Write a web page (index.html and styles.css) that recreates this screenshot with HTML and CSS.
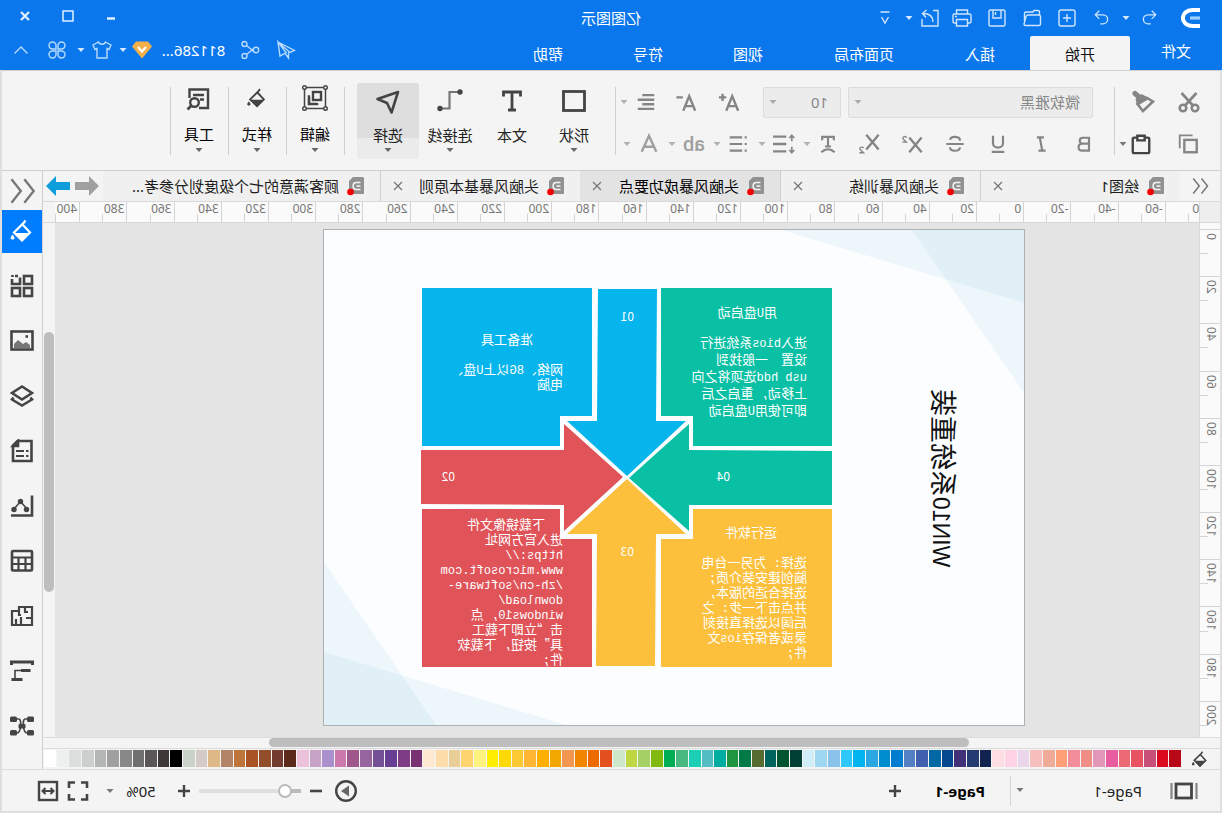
FILE: index.html
```html
<!DOCTYPE html>
<html lang="zh-CN">
<head>
<meta charset="utf-8">
<title>亿图图示</title>
<link rel="stylesheet" href="styles.css">
</head>
<body>
<svg class="sprite" aria-hidden="true">
  <symbol id="caret" viewBox="0 0 8 8"><path d="M0.500 2h7L4 6z" fill="currentColor"/></symbol>
  <symbol id="logo" viewBox="0 0 20 22"><path d="M1 3h7c13.500 0 13.500 16 0 16H1" fill="none" stroke="#fff" stroke-width="4"/><path d="M1 11h10" stroke="#9ed0ff" stroke-width="3.200"/></symbol>
  <symbol id="undo" viewBox="0 0 20 20"><path d="M7 2 2.500 6.500 7 11M3 6.500h8c7 0 7 10 0 10H8" /></symbol>
  <symbol id="redo" viewBox="0 0 20 20"><path d="M13 2l4.500 4.500L13 11M17 6.500H9c-7 0-7 10 0 10h3"/></symbol>
  <symbol id="new" viewBox="0 0 20 20"><rect x="2" y="2" width="16" height="16" rx="2"/><path d="M10 6v8M6 10h8"/></symbol>
  <symbol id="open" viewBox="0 0 20 20"><path d="M3 17.500c-1 0-1.500-.5-1.500-1.500V8.500c0-1 .5-1.500 1.500-1.500h11c1 0 1.500.5 2 1.500l2 7.500c0 1-.5 1.500-1.500 1.500zM2.500 7V4c0-1 .5-1.500 1.500-1.500h4l1 1.500h7c1 0 1.500.5 1.500 1.500V13"/></symbol>
  <symbol id="save" viewBox="0 0 20 20"><rect x="2" y="2" width="16" height="16" rx="1.500"/><path d="M6 2v8h8V2M11.500 4v3"/></symbol>
  <symbol id="print" viewBox="0 0 20 20"><path d="M4.500 6V2h11v4M4.500 15H2.500c-1 0-1.500-.5-1.500-1.500v-6c0-1 .5-1.500 1.500-1.500h15c1 0 1.500.5 1.500 1.500v6c0 1-.5 1.500-1.500 1.500h-2M4.500 11.500h11V18h-11zM15 8.500h2"/></symbol>
  <symbol id="export" viewBox="0 0 20 20"><path d="M7 2.500H2V18h16v-7M7 14c0-6 4-8.500 10-8.500M13.500 2l4 3.500-3.500 4"/></symbol>
  <symbol id="more" viewBox="0 0 12 16"><path d="M1.500 2h9M2.500 7 6 13l3.500-6"/></symbol>
  <symbol id="min" viewBox="0 0 14 14"><path d="M3 9.500h8" stroke-width="2.500"/></symbol>
  <symbol id="max" viewBox="0 0 14 14"><rect x="2" y="2" width="10" height="10"/></symbol>
  <symbol id="close" viewBox="0 0 14 14"><path d="M3 3l8 8M11 3l-8 8"/></symbol>
  <symbol id="send" viewBox="0 0 20 20"><path d="M18 2 1.500 10.500l4.500 2zM18 2 16 16l-6-3.500zM7.500 12.500v5.500l3-4"/></symbol>
  <symbol id="share" viewBox="0 0 20 20"><circle cx="4" cy="10" r="2.700"/><circle cx="15.500" cy="4" r="2.500"/><circle cx="15.500" cy="16" r="2.500"/><path d="M6.500 9.500H8.500L13.500 5.500M6.500 10.500H8.500l5 4"/></symbol>
  <symbol id="gem" viewBox="0 0 20 18"><path d="M4 0.500h12l4 5L10 17.500 0 5.500z" fill="#f3b04a"/><path d="M6 6l4 4.500L14 6" fill="none" stroke="#fff" stroke-width="2.200"/></symbol>
  <symbol id="shirt" viewBox="0 0 20 20"><path d="M6.500 2 1 5l2 4.500 2-1V18h10V8.500l2 1L19 5l-5.500-3c-1 3-6 3-7 0z"/></symbol>
  <symbol id="clover" viewBox="0 0 20 20"><path d="M9 9V5.500A3.500 3.500 0 1 0 5.500 9zM11 9h3.500A3.500 3.500 0 1 0 11 5.500zM9 11H5.500A3.500 3.500 0 1 0 9 14.500zM11 11v3.500a3.500 3.500 0 1 0 3.500-3.500z"/></symbol>
  <symbol id="up" viewBox="0 0 16 16"><path d="M1.500 11.500 8 5l6.500 6.500"/></symbol>

  <symbol id="cut" viewBox="0 0 24 24"><circle cx="6" cy="18" r="3.300"/><circle cx="18" cy="18" r="3.300"/><path d="M4.500 3 16 15.500M19.500 3 8 15.500"/></symbol>
  <symbol id="brush" viewBox="0 0 24 24"><path d="M3 11.500 9 8l9.500 6L13 21z"/><path d="M9 8.500 14.500 5.500l4.500 4-1 4.500z" fill="currentColor"/><path d="m17.500 6.500 3.500-3" stroke-width="5" stroke-linecap="round"/></symbol>
  <symbol id="copy" viewBox="0 0 24 24"><rect x="2.500" y="7.500" width="13.500" height="13.500"/><path d="M7 2.500h14v14" stroke-width="2"/></symbol>
  <symbol id="paste" viewBox="0 0 24 24"><rect x="3" y="5" width="18" height="17" rx="1.500"/><path d="M8 8V3h8v5z" fill="#f4f4f4"/></symbol>
  <symbol id="aplus" viewBox="0 0 24 24"><path d="M2 21.500 8.500 5.500 15 21.500M4.500 16.500h8M15 7h8M19 3v8"/></symbol>
  <symbol id="aminus" viewBox="0 0 24 24"><path d="M2 21.500 8.500 5.500 15 21.500M4.500 16.500h8M15.500 7h7"/></symbol>
  <symbol id="align" viewBox="0 0 24 24"><path d="M3 4.500h13M3 9.500h18M3 14.500h13M3 19.500h18"/></symbol>
  <symbol id="bold" viewBox="0 0 24 24"><path d="M6 4.500h7c5.500 0 5.500 7 0 7H6zM6 11.500h8c6 0 6 8.500 0 8.500H6z"/></symbol>
  <symbol id="italic" viewBox="0 0 24 24"><path d="M8.500 4h8.500M6.500 20h8.500M13.500 4l-3 16"/></symbol>
  <symbol id="underline" viewBox="0 0 24 24"><path d="M6 2v9c0 7 12 7 12 0V2M4.500 21.500h15"/></symbol>
  <symbol id="strike" viewBox="0 0 24 24"><path d="M1.500 12h21M18 7c-1-5-12-5-12 1M6 16c1 6 12 5 12 0"/></symbol>
  <symbol id="super" viewBox="0 0 24 24"><path d="M1.500 5l13.500 16M15 5 1.500 21"/><path d="M18 5c1-2 4-1 4 .5 0 1.500-2 2.500-4 4.500h4.500" stroke-width="1.500"/></symbol>
  <symbol id="sub" viewBox="0 0 24 24"><path d="M1.500 2l13.500 16M15 2 1.500 18"/><path d="M18 16.500c1-2 4-1 4 .5 0 1.500-2 2.500-4 4.500h4.500" stroke-width="1.500"/></symbol>
  <symbol id="tarc" viewBox="0 0 24 24"><path d="M5 7.500V3.500h14v4M12 3.500V15M8.500 15h7M4 22c5-5 11-5 16 0"/></symbol>
  <symbol id="spacing" viewBox="0 0 24 24"><path d="M9.500 4h14.500M9.500 12h14.500M9.500 20h14.500"/><path d="M3.500 2v7M3.500 15v7M.8 5.500l2.700-3 2.700 3M.8 18.500l2.700 3 2.700-3" stroke-width="1.800"/></symbol>
  <symbol id="list" viewBox="0 0 24 24"><path d="M7 4h15M7 12h15M7 20h15"/><path d="M1.500 4h2.500M1.500 12h2.500M1.500 20h2.500"/></symbol>
  <symbol id="fontcolor" viewBox="0 0 24 24"><path d="M4 20.500 12 3l8 17.500M7 15h10"/></symbol>

  <symbol id="rect" viewBox="0 0 28 28"><rect x="3.500" y="4.500" width="21" height="19" stroke-width="2.800"/></symbol>
  <symbol id="text" viewBox="0 0 28 28"><path d="M5.500 9.500V5h17v4.500M14 5v18.500M10 23h8" stroke-width="2.800"/></symbol>
  <symbol id="connector" viewBox="0 0 28 28"><path d="M5 5h9.500v16.500h9" stroke-width="2.200" stroke="#777"/><circle cx="4" cy="5" r="2.700" fill="currentColor" stroke="none"/><circle cx="24" cy="21.500" r="2.700" fill="currentColor" stroke="none"/></symbol>
  <symbol id="pointer" viewBox="0 0 28 28"><path d="M4 5 24.500 12l-9.500 4-4.500 9.500z" stroke-width="2.600" stroke-linejoin="round"/></symbol>
  <symbol id="edit" viewBox="0 0 28 28"><path d="M3.500 2.500h21v21h-21z" stroke-width="1.500"/><g fill="#f4f4f4" stroke-width="1.400"><circle cx="3.500" cy="2.500" r="1.800"/><circle cx="24.500" cy="2.500" r="1.800"/><circle cx="3.500" cy="23.500" r="1.800"/><circle cx="24.500" cy="23.500" r="1.800"/></g><rect x="8" y="7" width="8" height="8" stroke-width="2.400"/><path d="M19 11.500h1v7.500H12v-1" stroke-width="2.600"/></symbol>
  <symbol id="bucket" viewBox="0 0 28 28"><path d="M13 7 6 14.500l8 8 8-8L12 4.500l-1.500-2" stroke-width="2.200"/><path d="M6.500 15h15L14 23z" fill="currentColor" stroke="none"/><path d="M23.500 16.500c3 4 2 5 0 5s-3-1 0-5z" fill="currentColor" stroke="none"/></symbol>
  <symbol id="tools" viewBox="0 0 28 28"><path d="M14 23H5V4.500h18.500V13M9 10h11M9 14.500h4" stroke-width="2.400"/><circle cx="18.500" cy="17.500" r="4.300" stroke-width="2.400"/><path d="m21.500 20.500 4 4" stroke-width="2.600"/></symbol>

  <symbol id="docicon" viewBox="0 0 18 20"><path d="M2 1h10l4 4v13H2a1 1 0 0 1-1-1V2z" fill="#919191"/><path d="M4.500 6.500h4c4.500 0 4.500 7 0 7h-4M4.500 10h4" fill="none" stroke="#f4f4f4" stroke-width="1.600"/><circle cx="14.500" cy="16" r="3.300" fill="#f50000"/></symbol>
  <symbol id="dleft" viewBox="0 0 24 24"><path d="M10 2 2 12l8 10M21 2l-8 10 8 10"/></symbol>
  <symbol id="arrow" viewBox="0 0 24 20"><path d="M0 10 10 0v6h14v8H10v6z" fill="currentColor"/></symbol>

  <symbol id="grid" viewBox="0 0 24 24"><rect x="2" y="2" width="8" height="8"/><path d="M14 3.500V10h8V5M16 2h3M21.500 1v2"/><rect x="2" y="14" width="8" height="8"/><rect x="14" y="14" width="8" height="8"/></symbol>
  <symbol id="image" viewBox="0 0 24 24"><rect x="1.500" y="2.500" width="21" height="18"/><path d="M4 19v-3l4-3 3 2 5-4 4 4v4z" fill="#777" stroke="none"/><path d="M6 7.500h2.500"/></symbol>
  <symbol id="layers" viewBox="0 0 24 24"><path d="M12 2.500 22 9l-10 6.500L2 9zM3.500 13.500l-1.500 2 10 6 10-6-1.500-2"/></symbol>
  <symbol id="doc" viewBox="0 0 24 24"><path d="M2.500 2h14l4.500 4.500V22H2.500z"/><path d="M16 2v5h5z" fill="currentColor"/><path d="M10 12h8M10 17h8M5.500 12h2.500M5.500 17h2.500" stroke-width="2.200"/></symbol>
  <symbol id="chart" viewBox="0 0 24 24"><path d="M2 1.500v20h21"/><path d="m7 15 6.500-7.500 6.500 7.500" stroke-width="1.500"/><g fill="currentColor" stroke="none"><circle cx="7.500" cy="15.500" r="2.700"/><circle cx="13.500" cy="7.500" r="2.700"/><circle cx="20" cy="15.500" r="2.700"/></g></symbol>
  <symbol id="table" viewBox="0 0 24 24"><rect x="2" y="2" width="20" height="19.500" rx="1"/><path d="M2 8.500h20M2 15h20M8.500 8.500V21M15.500 8.500V21" stroke-width="2.200"/></symbol>
  <symbol id="plan" viewBox="0 0 24 24"><path d="M2 3h13v4h7v14H2zM9 3v5H6M2 14h6M13 21v-8M18 15v6M15 6v5h-2" stroke-width="2.200"/></symbol>
  <symbol id="gantt" viewBox="0 0 24 24"><path d="M1.500 6V3h21v3" stroke-width="3"/><path d="M3.500 11.500h9.500M11.500 20.500h11" stroke-width="3.200"/><path d="M12 11.500h7v9" stroke-width="1.600"/></symbol>
  <symbol id="mind" viewBox="0 0 24 24"><path d="M6 5h3c3 0 2 14-2 14H6M18 5h-3c-3 0-2 14 2 14h1M9 12h6" stroke-width="1.700"/><g fill="currentColor" stroke="none"><rect x="0" y="2.500" width="7" height="5.500" rx="1.500"/><rect x="17" y="2.500" width="7" height="5.500" rx="1.500"/><rect x="0" y="16" width="7" height="5.500" rx="1.500"/><rect x="17" y="16" width="7" height="5.500" rx="1.500"/><rect x="8.500" y="10" width="7" height="4.500" rx="1"/></g></symbol>

  <symbol id="slides" viewBox="0 0 28 24"><rect x="6.500" y="5" width="15.500" height="14" stroke-width="2.800"/><path d="M1.500 4v16M26.500 4v16" stroke="#858585" stroke-width="2.200"/></symbol>
  <symbol id="plus" viewBox="0 0 14 14"><path d="M7 1v12M1 7h12" stroke-width="2.400"/></symbol>
  <symbol id="minus" viewBox="0 0 14 14"><path d="M1 7h12" stroke-width="2.600"/></symbol>
  <symbol id="play" viewBox="0 0 24 24"><circle cx="12" cy="12" r="9.800" stroke-width="2.400"/><path d="M9 6.500 17 12l-8 5.500z" fill="#666" stroke="none"/></symbol>
  <symbol id="full" viewBox="0 0 24 24"><path d="M3 9V3.500h6M15 3.500h6V9M21 15v5.500h-6M9 20.500H3V15" stroke-width="2.600"/></symbol>
  <symbol id="fit" viewBox="0 0 24 24"><rect x="3" y="3" width="18" height="18" stroke-width="2.400"/><path d="M7 12h10M9.500 9 6.500 12l3 3M14.500 9l3 3-3 3" stroke-width="2"/></symbol>
</svg>

<div class="app">
  <header class="header">
    <div class="titlebar">
      <div class="quick">
        <svg class="logo"><use href="#logo"/></svg>
        <button class="qbtn" aria-label="撤销"><svg class="i18"><use href="#undo"/></svg></button>
        <button class="drop" aria-label="撤销列表"><svg class="caret"><use href="#caret"/></svg></button>
        <button class="qbtn" aria-label="重做"><svg class="i18"><use href="#redo"/></svg></button>
        <button class="qbtn" aria-label="新建"><svg class="i20"><use href="#new"/></svg></button>
        <button class="qbtn" aria-label="打开"><svg class="i20"><use href="#open"/></svg></button>
        <button class="qbtn" aria-label="保存"><svg class="i20"><use href="#save"/></svg></button>
        <button class="qbtn" aria-label="打印"><svg class="i20"><use href="#print"/></svg></button>
        <button class="qbtn qbtn-narrow" aria-label="导出"><svg class="i20"><use href="#export"/></svg></button>
        <button class="drop" aria-label="导出选项"><svg class="caret"><use href="#caret"/></svg></button>
        <button class="qbtn" aria-label="自定义"><svg class="more"><use href="#more"/></svg></button>
      </div>
      <h1 class="title">亿图图示</h1>
      <div class="wincontrols">
        <button class="winbtn" aria-label="最小化"><svg class="i14"><use href="#min"/></svg></button>
        <button class="winbtn" aria-label="最大化"><svg class="i14"><use href="#max"/></svg></button>
        <button class="winbtn winclose" aria-label="关闭"><svg class="i14"><use href="#close"/></svg></button>
      </div>
    </div>
    <div class="menubar">
      <nav class="menus">
        <button class="menu menu-file">文件</button>
        <button class="menu menu-active">开始</button>
        <button class="menu">插入</button>
        <button class="menu menu-wide">页面布局</button>
        <button class="menu">视图</button>
        <button class="menu">符号</button>
        <button class="menu">帮助</button>
      </nav>
      <div class="account">
        <button class="abtn" aria-label="发送"><svg class="i20"><use href="#send"/></svg></button>
        <button class="abtn" aria-label="分享"><svg class="i20"><use href="#share"/></svg></button>
        <button class="user">811286...</button>
        <svg class="gem"><use href="#gem"/></svg>
        <button class="drop" aria-label="账户"><svg class="caret"><use href="#caret"/></svg></button>
        <button class="abtn abtn-narrow" aria-label="皮肤"><svg class="i20"><use href="#shirt"/></svg></button>
        <button class="drop" aria-label="皮肤列表"><svg class="caret"><use href="#caret"/></svg></button>
        <button class="abtn" aria-label="应用"><svg class="i20"><use href="#clover"/></svg></button>
        <button class="abtn" aria-label="收起"><svg class="i16"><use href="#up"/></svg></button>
      </div>
    </div>
  </header>

  <div class="frame">
    <section class="ribbon">
      <div class="group clip">
        <div class="row">
          <button class="clipbtn" aria-label="剪切"><svg class="i24"><use href="#cut"/></svg></button>
          <button class="clipbtn" aria-label="格式刷"><svg class="i24"><use href="#brush"/></svg></button>
        </div>
        <div class="row">
          <button class="clipbtn" aria-label="复制"><svg class="i22"><use href="#copy"/></svg></button>
          <button class="clipbtn dark" aria-label="粘贴"><svg class="i22"><use href="#paste"/></svg></button>
          <svg class="caret clipcaret"><use href="#caret"/></svg>
        </div>
      </div>
      <div class="group font">
        <div class="row">
          <div class="pick family">
            <select class="picksel" aria-label="字体"><option>微软雅黑</option></select>
            <svg class="caret pickcaret"><use href="#caret"/></svg>
          </div>
          <div class="pick size">
            <select class="picksel" aria-label="字号"><option>10</option></select>
            <svg class="caret pickcaret"><use href="#caret"/></svg>
          </div>
          <button class="fbtn first" aria-label="增大字号"><svg class="i22"><use href="#aplus"/></svg></button>
          <button class="fbtn" aria-label="减小字号"><svg class="i22"><use href="#aminus"/></svg></button>
          <button class="combo" aria-label="对齐"><svg class="i22"><use href="#align"/></svg><svg class="caret"><use href="#caret"/></svg></button>
        </div>
        <div class="row">
          <button class="fbtn" aria-label="粗体"><svg class="i20"><use href="#bold"/></svg></button>
          <button class="fbtn" aria-label="斜体"><svg class="i20"><use href="#italic"/></svg></button>
          <button class="fbtn" aria-label="下划线"><svg class="i20"><use href="#underline"/></svg></button>
          <button class="fbtn" aria-label="删除线"><svg class="i20"><use href="#strike"/></svg></button>
          <button class="fbtn" aria-label="上标"><svg class="i22"><use href="#super"/></svg></button>
          <button class="fbtn" aria-label="下标"><svg class="i22"><use href="#sub"/></svg></button>
          <button class="combo" aria-label="文字方向"><svg class="i20"><use href="#tarc"/></svg><svg class="caret"><use href="#caret"/></svg></button>
          <button class="combo" aria-label="行距"><svg class="i22"><use href="#spacing"/></svg><svg class="caret"><use href="#caret"/></svg></button>
          <button class="combo" aria-label="列表"><svg class="i20"><use href="#list"/></svg><svg class="caret"><use href="#caret"/></svg></button>
          <button class="combo pale"><span class="ab">ab</span><svg class="caret"><use href="#caret"/></svg></button>
          <button class="combo pale" aria-label="字体颜色"><svg class="i22"><use href="#fontcolor"/></svg><svg class="caret"><use href="#caret"/></svg></button>
        </div>
      </div>
      <div class="group tools">
        <button class="tool"><svg class="i28"><use href="#rect"/></svg><span class="toolname">形状</span><svg class="caret"><use href="#caret"/></svg></button>
        <button class="tool"><svg class="i28"><use href="#text"/></svg><span class="toolname">文本</span></button>
        <button class="tool"><svg class="i28"><use href="#connector"/></svg><span class="toolname">连接线</span><svg class="caret"><use href="#caret"/></svg></button>
        <button class="tool tool-active"><svg class="i28"><use href="#pointer"/></svg><span class="toolname">选择</span><svg class="caret"><use href="#caret"/></svg></button>
      </div>
      <div class="group single"><button class="tool"><svg class="i28"><use href="#edit"/></svg><span class="toolname">编辑</span><svg class="caret"><use href="#caret"/></svg></button></div>
      <div class="group single"><button class="tool"><svg class="i24"><use href="#bucket"/></svg><span class="toolname">样式</span><svg class="caret"><use href="#caret"/></svg></button></div>
      <div class="group single"><button class="tool"><svg class="i28"><use href="#tools"/></svg><span class="toolname">工具</span><svg class="caret"><use href="#caret"/></svg></button></div>
    </section>

    <div class="middle">
      <main class="main">
        <div class="tabs">
          <button class="tabscroll" aria-label="收起左侧"><svg class="i18"><use href="#dleft"/></svg></button>
          <div class="tab"><svg class="docicon"><use href="#docicon"/></svg><span class="tabname">绘图1</span><button class="tabclose" aria-label="关闭"><svg class="i14"><use href="#close"/></svg></button></div>
          <div class="tab"><svg class="docicon"><use href="#docicon"/></svg><span class="tabname">头脑风暴训练</span><button class="tabclose" aria-label="关闭"><svg class="i14"><use href="#close"/></svg></button></div>
          <div class="tab tab-active"><svg class="docicon"><use href="#docicon"/></svg><span class="tabname">头脑风暴成功要点</span><button class="tabclose" aria-label="关闭"><svg class="i14"><use href="#close"/></svg></button></div>
          <div class="tab"><svg class="docicon"><use href="#docicon"/></svg><span class="tabname">头脑风暴基本原则</span><button class="tabclose" aria-label="关闭"><svg class="i14"><use href="#close"/></svg></button></div>
          <div class="tab tab-last"><svg class="docicon"><use href="#docicon"/></svg><span class="tabname">顾客满意的七个级度划分参考...</span></div>
          <div class="tabnav">
            <button class="navbtn" aria-label="上一个"><svg class="navarrow"><use href="#arrow"/></svg></button>
            <button class="navbtn navnext" aria-label="下一个"><svg class="navarrow"><use href="#arrow"/></svg></button>
          </div>
        </div>
        <div class="hruler"><div class="corner"></div><div class="hview"><div class="hscale" id="hscale"></div></div></div>
        <div class="work">
          <div class="vruler"><div class="vscale" id="vscale"></div></div>
          <div class="canvas">
            <div class="page">
              <svg class="shapes" viewBox="0 0 700 495" aria-hidden="true">
                <g fill="#8cc8e0" fill-opacity=".12"><path d="M0 0h242L0 73zM700 495H458l242-73z"/><path d="M0 0h112L0 163zM700 495H588l112-163z"/></g>
                <g fill="#09bfa4"><path d="M363 58H192v158h139v-30h32z"/><path d="M192 221v54h143v26l60-53-60-54v26z"/></g>
                <g fill="#05b5ec"><path d="M432 58h170v158H464v-30h-32z"/><path d="M426 59h-59l1 132h-30l59 55 60-55h-30z"/></g>
                <g fill="#e05358"><path d="M464 279h138v158H432V309h32z"/><path d="M603 220H460v-26l-59 53 59 54v-26l143-1z"/></g>
                <g fill="#fcc03d"><path d="M331 279H192v158h171V309h-32z"/><path d="m397 249-59 55h30l1 132h59l-1-132h30z"/></g>
              </svg>
              <h2 class="headline"><span class="headlatin">WIN10</span>系统重装</h2>
              <span class="num n1">01</span><span class="num n2">02</span><span class="num n3">03</span><span class="num n4">04</span>
              <section class="note note-usb"><h3 class="notetitle">用<span class="lat">U</span>盘启动</h3>
                <p class="notebody">进入<span class="lat">bios</span>系统进行<br>设置　一般找到<br><span class="lat">usb hdd</span>选项将之向<br>上移动<span class="lat">, </span>重启之后<br>即可使用<span class="lat">U</span>盘启动</p></section>
              <section class="note note-prep"><h3 class="notetitle">准备工具</h3>
                <p class="notebody">网络、<span class="lat">8G</span>以上<span class="lat">U</span>盘、<br>电脑</p></section>
              <section class="note note-down"><h3 class="notetitle">下载镜像文件</h3>
                <p class="notebody">进入官方网址<br><span class="lat">https://</span><br><span class="lat">www.microsoft.com</span><br><span class="lat">/zh-cn/software-</span><br><span class="lat">download/</span><br><span class="lat">windows10, </span>点<br>击“立即下载工<br>具”按钮<span class="lat">, </span>下载软<br>件<span class="lat">;</span></p></section>
              <section class="note note-run"><h3 class="notetitle">运行软件</h3>
                <p class="notebody">选择<span class="lat">: </span>为另一台电<br>脑创建安装介质<span class="lat">;</span><br>选择合适的版本<span class="lat">,</span><br>并点击下一步<span class="lat">: </span>之<br>后阔以选择直接刻<br>录或者保存<span class="lat">ios</span>文<br>件<span class="lat">;</span></p></section>
            </div>
          </div>
          <div class="vscroll"><div class="vthumb"></div></div>
        </div>
        <div class="hscroll"><div class="hthumb"></div></div>
        <div class="palette"><button class="fill" aria-label="填充"><svg class="i20"><use href="#bucket"/></svg></button><div class="swatches" id="swatches"></div></div>
      </main>
      <aside class="sidebar">
        <button class="expand" aria-label="收起面板"><svg class="i28"><use href="#dleft"/></svg></button>
        <button class="side side-active" aria-label="填充"><svg class="i28"><use href="#bucket"/></svg></button>
        <button class="side" aria-label="符号库"><svg class="i24"><use href="#grid"/></svg></button>
        <button class="side" aria-label="图片"><svg class="i24"><use href="#image"/></svg></button>
        <button class="side" aria-label="图层"><svg class="i24"><use href="#layers"/></svg></button>
        <button class="side" aria-label="文档"><svg class="i24"><use href="#doc"/></svg></button>
        <button class="side" aria-label="图表"><svg class="i24"><use href="#chart"/></svg></button>
        <button class="side" aria-label="表格"><svg class="i24"><use href="#table"/></svg></button>
        <button class="side" aria-label="平面图"><svg class="i24"><use href="#plan"/></svg></button>
        <button class="side" aria-label="甘特图"><svg class="i24"><use href="#gantt"/></svg></button>
        <button class="side" aria-label="思维导图"><svg class="i24"><use href="#mind"/></svg></button>
      </aside>
    </div>

    <footer class="status">
      <button class="slides" aria-label="页面列表"><svg class="slidesicon"><use href="#slides"/></svg></button>
      <div class="pagepick"><select class="pagesel" aria-label="页面"><option>Page-1</option></select><svg class="caret pagecaret"><use href="#caret"/></svg></div>
      <button class="pagetab">Page-1</button>
      <button class="sbtn" aria-label="新建页面"><svg class="i14"><use href="#plus"/></svg></button>
      <div class="zoombar">
        <button class="sbtn" aria-label="放映"><svg class="i24"><use href="#play"/></svg></button>
        <button class="sbtn" aria-label="缩小"><svg class="i14"><use href="#minus"/></svg></button>
        <input class="zoom" type="range" min="0" max="100" value="10" aria-label="缩放">
        <button class="sbtn" aria-label="放大"><svg class="i14"><use href="#plus"/></svg></button>
        <button class="percent">50%<svg class="caret"><use href="#caret"/></svg></button>
        <button class="sbtn" aria-label="全屏"><svg class="i24"><use href="#full"/></svg></button>
        <button class="sbtn" aria-label="适应宽度"><svg class="i24"><use href="#fit"/></svg></button>
      </div>
    </footer>
  </div>
</div>
<script src="app.js"></script>
</body>
</html>
```

FILE: styles.css
```css
* { box-sizing: border-box; }
body {
  margin: 0;
  font: 15px/20px "Noto Sans", "Noto Sans CJK SC", sans-serif;
  color: #1c1c1c;
  overflow: hidden;
}
button {
  display: flex;
  align-items: center;
  justify-content: center;
  margin: 0;
  padding: 0;
  border: 0;
  background: none;
  color: inherit;
  font: inherit;
  white-space: nowrap;
}
h1, h2, h3, p { margin: 0; font-weight: 400; }
svg { flex: none; fill: none; stroke: currentColor; stroke-width: 2; }
.sprite { position: absolute; width: 0; height: 0; }

/* The whole window is shown flipped left to right. */
.app {
  display: flex;
  flex-direction: column;
  height: 100vh;
  transform: scaleX(-1);
}

.i14 { width: 14px; height: 14px; }
.i16 { width: 16px; height: 16px; }
.i18 { width: 18px; height: 18px; }
.i20 { width: 20px; height: 20px; }
.i22 { width: 22px; height: 22px; }
.i24 { width: 24px; height: 24px; }
.i28 { width: 28px; height: 28px; }
.caret { width: 8px; height: 8px; stroke: none; }

/* Header */
.header { background: #0a77ec; color: #fff; height: 70px; flex: none; }
.header svg { stroke-width: 1.4; }
.header .caret { stroke: none; color: #d4e8ff; }
.titlebar { display: grid; grid-template-columns: 1fr auto 1fr; align-items: center; height: 36px; }
.quick { display: flex; align-items: center; padding-left: 21px; color: #cfe5fd; }
.logo { width: 20px; height: 22px; margin-right: 14px; }
.qbtn { width: 35px; height: 28px; }
.qbtn-narrow { width: 30px; }
.drop { width: 12px; height: 20px; }
.more { width: 12px; height: 16px; }
.title { font-size: 15px; line-height: 20px; }
.wincontrols { display: flex; justify-content: flex-end; padding: 0 4px 4px 0; color: #e2f0ff; }
.winbtn { width: 43px; height: 24px; }
.header .winbtn svg { stroke-width: 1.5; }
.header .winclose svg { stroke-width: 2.2; }
.menubar { display: flex; justify-content: space-between; height: 34px; }
.menus { display: flex; }
.menu { width: 100px; height: 34px; padding-top: 2px; }
.menu-file { width: 92px; padding: 0 0 4px; }
.menu-wide { width: 132px; }
.menu-active { background: #f4f4f4; color: #111; border-radius: 2px 2px 0 0; }
.account { display: flex; align-items: center; height: 28px; padding-right: 3px; color: #b9dbff; }
.abtn { width: 36px; height: 24px; }
.abtn-narrow { width: 30px; }
.user { width: 77px; color: #fff; }
.gem { width: 20px; height: 18px; margin: 0 3px; }
.header .gem { stroke: none; }

/* Window frame */
.frame {
  display: flex;
  flex-direction: column;
  flex: 1;
  min-height: 0;
  border: solid #dfdfdf;
  border-width: 0 2px 2px;
  background: #f4f4f4;
}

/* Ribbon */
.ribbon {
  display: flex;
  height: 101px;
  flex: none;
  border: solid #cfcfcf;
  border-width: 1px 0;
  padding-top: 12px;
}
.group { display: flex; position: relative; height: 76px; }
.group::after { content: ""; position: absolute; right: 0; top: 4px; height: 68px; width: 1px; background: #cfcfcf; }
.clip, .font { flex-direction: column; gap: 12px; padding-top: 4px; color: #858585; }
.row { display: flex; align-items: center; height: 30px; }
.clip { width: 106px; padding-left: 16px; }
.clipbtn { width: 32px; height: 28px; margin-right: 15px; }
.clipcaret { margin-left: -17px; color: #777; }
.dark { color: #444; }
.clip svg, .font svg { stroke-width: 2.6; }
.clip .caret, .font .caret { stroke: none; }
.font { width: 499px; padding-left: 8px; }
.pick { position: relative; height: 31px; border: 1px solid #dcdcdc; border-radius: 2px; background: #ececec; }
.family { flex: 0 0 245px; margin: 0 7px 0 13px; }
.size { flex: 0 0 78px; }
.picksel {
  appearance: none;
  width: 100%;
  height: 29px;
  padding: 0 24px 0 12px;
  border: 0;
  background: none;
  color: #888;
  font: inherit;
}
.pickcaret { position: absolute; right: 5px; top: 10px; color: #aaa; }
.fbtn { width: 43px; height: 30px; }
.first { margin-left: 12px; }
.combo { width: 45px; height: 30px; gap: 7px; justify-content: flex-end; }
.combo .caret { color: #b0b0b0; }
.pale { color: #a0a0a0; }
.ab { font: 500 20px/24px Roboto, sans-serif; }

.tools { padding: 0 13px 0 10px; }
.tool {
  flex-direction: column;
  justify-content: flex-start;
  width: 62px;
  height: 76px;
  padding-top: 4px;
  border-radius: 2px;
  color: #444;
}
.tool svg { height: 28px; }
.tool .caret { height: 8px; color: #666; }
.toolname { height: 20px; margin: 10px 0 1px; color: #222; line-height: 20px; }
.tool-active { background: linear-gradient(#dedede 55px, #ebebeb 55px); }
.single .tool { width: 58px; padding-top: 2px; }
.single .toolname { color: #000; margin: 11px 0 2px; }

/* Middle */
.middle { display: flex; flex: 1; min-height: 0; }
.main { display: flex; flex-direction: column; flex: 1; min-width: 0; }
.tabs { display: flex; height: 31px; flex: none; border-bottom: 1px solid #d9d9d9; }
.tabscroll { width: 40px; color: #777; }
.tab {
  display: flex;
  align-items: center;
  flex: 0 0 200px;
  padding: 0 10px 0 15px;
  border-right: 1px solid #cfcfcf;
  background: #f0f0f0;
}
.tab-active { background: #e3e3e3; color: #000; border-right: 0; }
.tab-last { flex: 0 1 277px; border-right: 0; }
.docicon { width: 18px; height: 20px; margin-right: 8px; stroke: none; }
.tabname { flex: 1; white-space: nowrap; }
.tabclose svg { width: 14px; height: 14px; stroke-width: 1.3; color: #777; }
.tabnav { display: flex; align-items: center; justify-content: space-between; flex: 1; padding: 0 3px 0 4px; }
.navbtn { color: #a0a0a0; }
.navnext { color: #0e9edc; transform: scaleX(-1); }
.navarrow { width: 24px; height: 20px; stroke: none; }

.hruler { display: flex; height: 21px; flex: none; border-bottom: 1px solid #d9d9d9; color: #777; }
.corner { width: 21px; background: #eee; border-right: 1px solid #d9d9d9; flex: none; }
.hview { flex: 1; min-width: 0; overflow-x: clip; background: #fafafa; margin-right: 12px; }
.hscale { display: grid; grid-template-columns: repeat(25, 1fr); width: 1180px; height: 20px; margin-left: -14px; }
.hcell {
  position: relative;
  border-left: 1px solid #d4d4d4;
  padding-left: 2px;
  font: 12px/13px "Noto Sans", sans-serif;
}
.hcell::after { content: ""; position: absolute; left: 50%; bottom: 0; width: 1px; height: 8px; background: #d4d4d4; }
.work { display: flex; flex: 1; min-height: 0; }
.vruler { width: 21px; flex: none; overflow-y: clip; background: #fafafa; border-right: 1px solid #d9d9d9; padding-top: 6px; }
.vscale { display: grid; grid-template-rows: repeat(11, 1fr); height: 519px; color: #777; }
.vcell { position: relative; border-top: 1px solid #d4d4d4; padding: 3px 0 0 2px; }
.vcell::after { content: ""; position: absolute; top: 50%; right: 0; height: 1px; width: 8px; background: #d4d4d4; }
.vlabel {
  display: block;
  writing-mode: vertical-rl;
  transform: rotate(180deg);
  width: 13px;
  font: 12px/13px "Noto Sans", sans-serif;
}
.canvas { flex: 1; min-width: 0; overflow: hidden; background: #e4e4e4; padding: 6px 0 0 174px; }
.vscroll { width: 12px; padding: 109px 1px 0; }
.vthumb { height: 260px; border-radius: 5px; background: #bebebe; }
.hscroll { height: 12px; flex: none; border: solid #dcdcdc; border-width: 1px 0; padding: 0 210px 0 251px; }
.hthumb { width: 700px; height: 9px; border-radius: 5px; background: #bebebe; }
.palette { display: flex; align-items: flex-start; height: 20px; flex: none; padding-top: 1px; }
.fill { width: 39px; color: #444; }
.swatches { display: grid; grid-template-columns: repeat(90, 1fr); gap: 1px; flex: 1; height: 17px; padding-right: 1px; }
.swatch { height: 17px; }

/* Document page */
.page { position: relative; width: 702px; height: 497px; border: 1px solid #adb1b3; background: #fbfdff; color: #fff; }
.shapes { display: block; width: 700px; height: 495px; stroke: none; }
.headline {
  position: absolute;
  left: 62px;
  top: 159px;
  writing-mode: vertical-rl;
  text-orientation: sideways;
  transform: rotate(180deg);
  color: #111;
  font: 27px/36px "Noto Sans CJK SC", sans-serif;
}
.headlatin { font-family: "Liberation Sans", sans-serif; font-size: 23px; line-height: 0; }
.num { position: absolute; font: 12px/14px "Noto Sans CJK SC", sans-serif; }
.n1 { left: 390px; top: 79px; }
.n2 { left: 569px; top: 239px; }
.n3 { left: 390px; top: 314px; }
.n4 { left: 294px; top: 239px; }
.note { position: absolute; font: 13px/15px "Noto Sans CJK SC", sans-serif; white-space: nowrap; }
.notetitle { font-size: 13px; line-height: 15px; padding-left: 30px; }
.lat { font-family: "Liberation Mono", monospace; font-size: 12px; line-height: 0; white-space: pre; }
.notebody { margin-top: 15px; }
.note-usb { left: 217px; top: 74px; line-height: 17px; }
.note-usb .notebody { margin-top: 14px; }
.note-prep { left: 461px; top: 101px; }
.note-down { left: 461px; top: 286px; }
.note-run { left: 217px; top: 294px; }
.note-down .notebody { margin-top: 0; }
.note-down .notetitle { padding-left: 18px; }

/* Sidebar */
.sidebar { display: flex; flex-direction: column; width: 41px; flex: none; border-left: 1px solid #cfcfcf; color: #444; }
.sidebar svg { stroke-width: 2.6; }
.expand { height: 39px; color: #777; }
.expand svg { stroke-width: 2; }
.side { height: 43px; margin-bottom: 12px; }
.side-active { background: #007dff; color: #fff; margin-bottom: 11px; }

/* Status bar */
.status { display: flex; align-items: center; height: 42px; flex: none; border-top: 1px solid #dcdcdc; color: #444; }
.slides { width: 72px; }
.slidesicon { width: 28px; height: 24px; }
.pagepick { position: relative; width: 138px; height: 30px; border-right: 1px solid #d4d4d4; }
.pagesel { appearance: none; width: 100%; height: 30px; padding: 0 0 0 6px; border: 0; background: none; color: #222; font: inherit; }
.pagecaret { position: absolute; right: 5px; top: 10px; color: #777; }
.pagetab { width: 100px; color: #000; font-weight: 700; }
.sbtn { width: 30px; height: 30px; }
.zoombar { display: flex; align-items: center; margin-left: auto; padding-right: 31px; }
.zoom {
  appearance: none;
  width: 102px;
  height: 14px;
  margin: 0;
  background: linear-gradient(90deg, #bbb 15px, #dfdfdf 15px) center / 100% 4px no-repeat;
}
.zoom::-webkit-slider-thumb {
  appearance: none;
  width: 14px;
  height: 14px;
  border: 2px solid #bbb;
  border-radius: 50%;
  background: #fff;
}
.percent { width: 76px; gap: 12px; color: #222; }
.percent .caret { color: #777; }
```

FILE: app.js
```js
const hscale = document.getElementById('hscale');
for (let v = -80; v <= 400; v += 20) {
  const cell = document.createElement('span');
  cell.className = 'hcell';
  cell.textContent = v;
  hscale.append(cell);
}

const vscale = document.getElementById('vscale');
for (let v = 0; v <= 200; v += 20) {
  const cell = document.createElement('span');
  const label = document.createElement('span');
  cell.className = 'vcell';
  label.className = 'vlabel';
  label.textContent = v;
  cell.append(label);
  vscale.append(cell);
}

const colors = ('b80717 dc0a1e c85078 e85263 eb6a73 e85d9f e198b8 ee8e87 f28e99 ff9f78 f0ab98 f6bebd ead5ea ffd2e6 ffdee3 ' +
  '11244f 233b70 423079 064890 0068a4 3f60ae 537fc4 007dcf 008dd0 2ba7e2 00b4f0 2fc8fb 89c2eb 9ed8f0 d0edf8 ' +
  '004035 005530 00645d 556b2f 007a46 1e953f 00ada0 52bdc2 1bcfb4 48b980 00af54 80b910 a4d065 bfd743 cde7ca ' +
  'e45020 ec6a00 f28500 f29750 f2a600 ffaf00 ffb733 fbc932 ffd900 ffee00 fff380 fed46f eace97 ffddab ffe9d0 ' +
  '783173 7e3c85 673e94 745096 96659f a0578c cc7aae aa91ce c7a3c8 ecc1da 5b2a1a 733c30 924d2a a95325 be753c ' +
  'b28468 dfb887 d5cbc6 c9d3ca 000000 3e3837 595757 707070 888888 9fa09f b4b5b5 cdcfce dcdddd eeefef ffffff').split(' ');
const swatches = document.getElementById('swatches');
for (const c of colors) {
  const b = document.createElement('button');
  b.className = 'swatch';
  b.setAttribute('aria-label', '#' + c);
  b.style.background = '#' + c;
  swatches.append(b);
}
```
